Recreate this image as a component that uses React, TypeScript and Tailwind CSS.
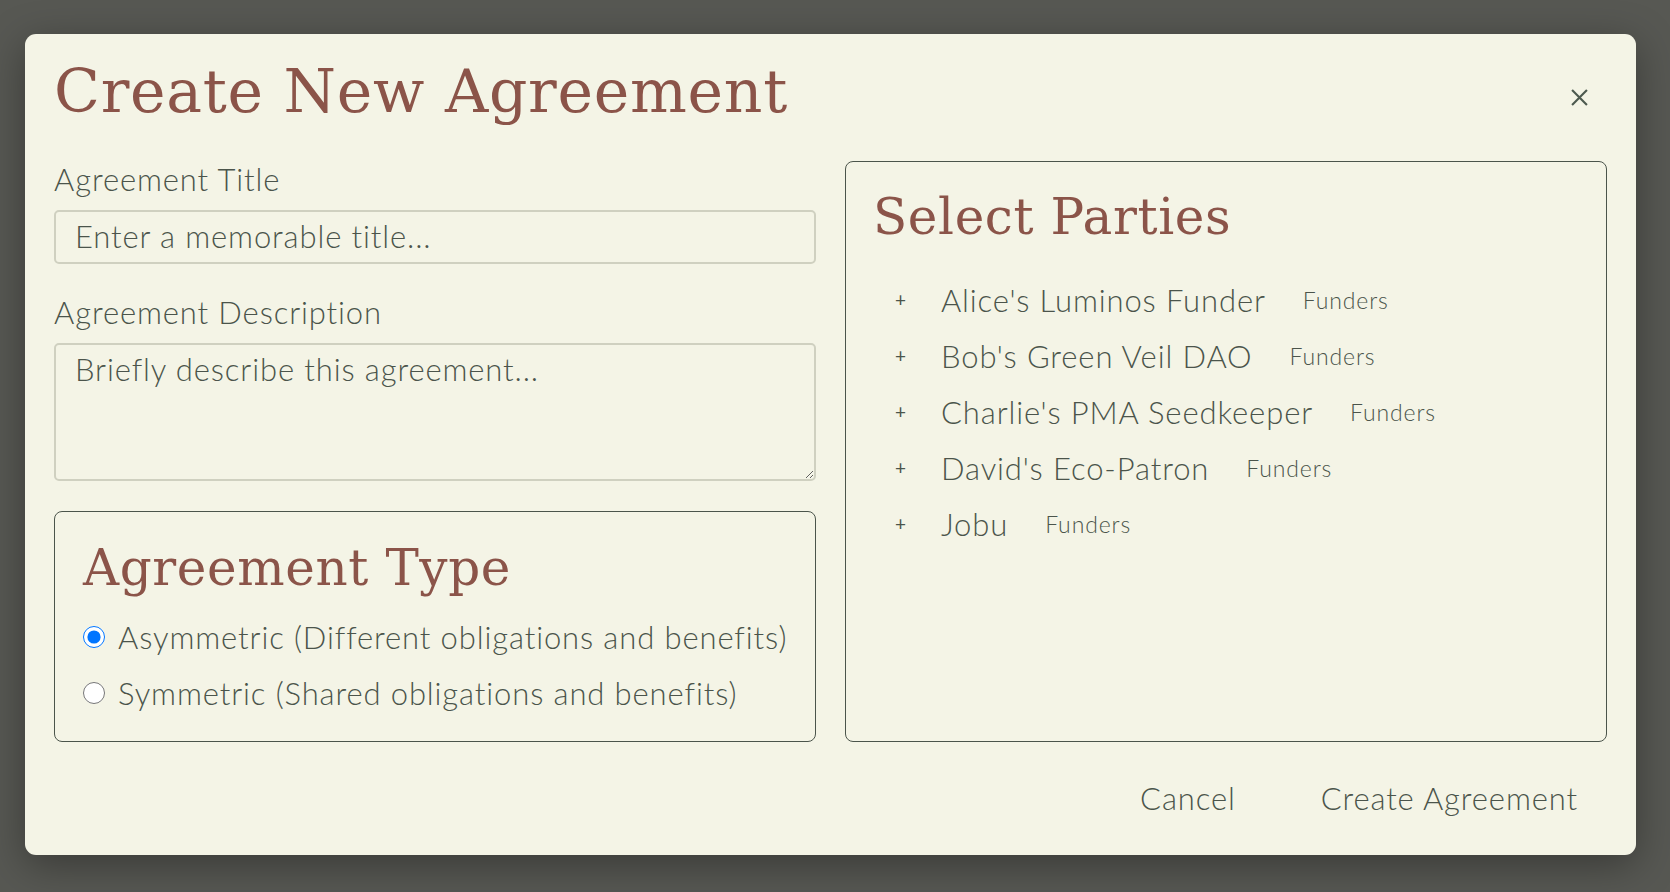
import { useState } from 'react';

const parties = [
	"Alice's Luminos Funder",
	"Bob's Green Veil DAO",
	"Charlie's PMA Seedkeeper",
	"David's Eco-Patron",
	'Jobu',
];

const sans = "font-['Lato','Noto_Sans',sans-serif] font-light tracking-[0.055em]";
const serif = "font-['DejaVu_Serif','Liberation_Serif',serif]";

export default function App() {
	const [type, setType] = useState<'asym' | 'sym'>('asym');

	return (
		<div className="flex min-h-screen w-full bg-[#575853] pl-[25px] pt-[34px]">
			<div
				className={`flex h-[821px] w-[1611px] flex-col rounded-[11px] bg-[#f4f4e6] px-[29px] shadow-[0_10px_40px_rgba(0,0,0,0.35)] ${sans}`}
			>
				<div className="flex h-[127px] items-center justify-between pb-[14px]">
					<h1 className={`${serif} text-[60px] leading-none tracking-[0.012em] text-[#8b5449]`}>
						Create New Agreement
					</h1>
					<button className="mr-[19px] mt-[14px] text-[#4d5a4f]">
						<svg width="17" height="17" viewBox="0 0 16 16" stroke="currentColor" strokeWidth="2">
							<path d="M1 1L15 15M15 1L1 15" />
						</svg>
					</button>
				</div>

				<div className="grid grid-cols-2 gap-[29px]">
					<div className="flex min-w-0 flex-col">
						<label className="text-[31px] leading-[36px] text-[#4b544b]">Agreement Title</label>
						<input
							className="mt-[13px] h-[54px] rounded-[5px] border-2 border-[#cfd0c0] bg-transparent px-[19px] pb-[3px] text-[31px] text-[#4b544b] outline-none placeholder:text-[#4b544b]"
							placeholder="Enter a memorable title..."
						/>
						<label className="mt-[30px] text-[31px] leading-[36px] text-[#4b544b]">Agreement Description</label>
						<textarea
							className="mt-[13px] h-[138px] resize-y rounded-[5px] border-2 border-[#cfd0c0] bg-transparent px-[19px] pt-[5px] text-[31px] leading-[38px] text-[#4b544b] outline-none placeholder:text-[#4b544b]"
							placeholder="Briefly describe this agreement..."
						/>
						<div className="mt-[30px] flex h-[231px] flex-col rounded-[8px] border border-[#4b544b] pl-[28px] pr-[8px] pt-[24px]">
							<h2 className={`${serif} text-[50px] leading-[64px] tracking-[0.012em] text-[#8b5449]`}>
								Agreement Type
							</h2>
							<div className="mt-[9px] flex flex-col">
								<label className="flex h-[56px] items-center gap-[13px] whitespace-nowrap text-[31px] text-[#4b544b]">
									<input
										type="radio"
										name="type"
										checked={type === 'asym'}
										onChange={() => setType('asym')}
										className="m-0 h-[22px] w-[22px] shrink-0"
									/>
									Asymmetric (Different obligations and benefits)
								</label>
								<label className="flex h-[56px] items-center gap-[13px] whitespace-nowrap text-[31px] text-[#4b544b]">
									<input
										type="radio"
										name="type"
										checked={type === 'sym'}
										onChange={() => setType('sym')}
										className="m-0 h-[22px] w-[22px] shrink-0"
									/>
									Symmetric (Shared obligations and benefits)
								</label>
							</div>
						</div>
					</div>

					<div className="flex h-[581px] flex-col rounded-[8px] border border-[#4b544b] px-[27px] pt-[23px]">
						<h2 className={`${serif} text-[50px] leading-[64px] tracking-[0.012em] text-[#8b5449]`}>
							Select Parties
						</h2>
						<ul className="mt-[23px] flex flex-col">
							{parties.map((p) => (
								<li key={p} className="flex h-[56px] items-center">
									<button className="w-[68px] pl-[22px] text-left text-[19px] font-normal text-[#4b544b]">+</button>
									<span className="text-[31px] text-[#4b544b]">{p}</span>
									<span className="ml-[37px] text-[23px] text-[#4b544b]">Funders</span>
								</li>
							))}
						</ul>
					</div>
				</div>

				<div className="mt-auto mb-[31px] flex justify-end gap-[27px]">
					<button className="h-[52px] px-[29px] text-[31px] text-[#4b544b]">Cancel</button>
					<button className="h-[52px] px-[29px] text-[31px] text-[#4b544b]">Create Agreement</button>
				</div>
			</div>
		</div>
	);
}
